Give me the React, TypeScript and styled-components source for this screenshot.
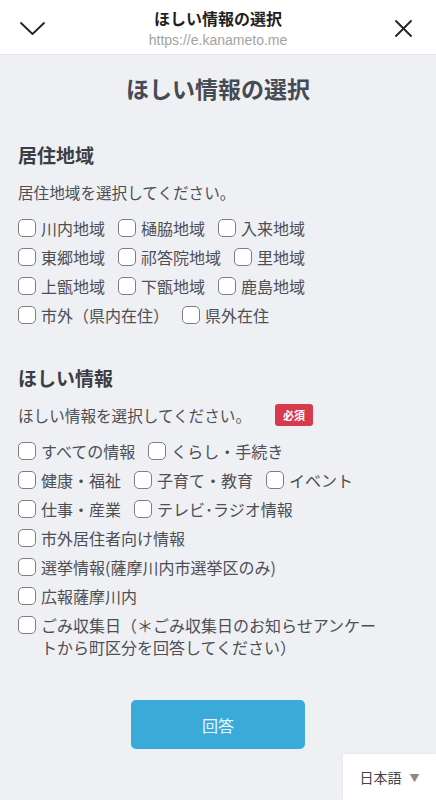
import React from "react";
import styled, { createGlobalStyle } from "styled-components";

const Global = createGlobalStyle`
  html, body { margin: 0; padding: 0; }
  body {
    background: #eff0f4;
    font-family: "Noto Sans CJK JP", "Noto Sans", sans-serif;
    color: #4a4a4a;
  }
`;

const Page = styled.div`
  width: 436px;
  min-height: 800px;
  background: #eff0f4;
  display: flex;
  flex-direction: column;
  position: relative;
`;

const TopBar = styled.header`
  height: 55px;
  background: #fff;
  display: grid;
  grid-template-columns: 64px 1fr 64px;
  align-items: center;
  border-bottom: 1px solid #e8e8ec;
  box-sizing: border-box;
`;

const IconBtn = styled.div<{ $align: "left" | "right" }>`
  display: flex;
  justify-content: ${(p) => (p.$align === "left" ? "flex-start" : "flex-end")};
  padding: ${(p) => (p.$align === "left" ? "2px 0 0 20px" : "2px 24px 0 0")};
  align-items: center;
  color: #222;
`;

const TitleBlock = styled.div`
  display: flex;
  flex-direction: column;
  align-items: center;
  padding-top: 1px;
`;

const BarTitle = styled.div`
  font-size: 16px;
  font-weight: 700;
  color: #1f1f1f;
  line-height: 20px;
`;

const BarUrl = styled.div`
  font-family: "Liberation Sans", Arial, sans-serif;
  font-size: 14px;
  color: #a3a3a3;
  line-height: 16px;
  margin-top: 4px;
`;

const Main = styled.main`
  padding: 16px 18px 0 18px;
  display: flex;
  flex-direction: column;
`;

const PageTitle = styled.h1`
  margin: 0;
  text-align: center;
  font-size: 23px;
  font-weight: 700;
  color: #464a52;
  line-height: 34px;
`;

const Section = styled.section<{ $top: number }>`
  margin-top: ${(p) => p.$top}px;
  display: flex;
  flex-direction: column;
`;

const SectionHeading = styled.h2`
  margin: 0;
  font-size: 19px;
  font-weight: 700;
  color: #3b3e44;
  line-height: 26px;
`;

const Desc = styled.div`
  margin-top: 13px;
  font-size: 15.6px;
  color: #4d4f54;
  line-height: 22px;
  display: flex;
  align-items: center;
  gap: 24px;
`;

const Badge = styled.span`
  display: inline-flex;
  align-items: center;
  justify-content: center;
  width: 38px;
  height: 22px;
  border-radius: 3px;
  background: #d73a4c;
  color: #fff;
  font-size: 11px;
  font-weight: 700;
`;

const Options = styled.div`
  margin-top: 14px;
  display: flex;
  flex-direction: column;
`;

const Row = styled.div`
  display: flex;
  flex-wrap: wrap;
  align-items: flex-start;
  column-gap: 13px;
`;

const Option = styled.label`
  display: flex;
  align-items: flex-start;
  gap: 5px;
  font-size: 16px;
  line-height: 22px;
  color: #4d4f54;
  min-height: 29px;
`;

const Box = styled.span`
  flex: none;
  box-sizing: border-box;
  width: 18px;
  height: 18px;
  border: 1.5px solid #7d7d7d;
  border-radius: 5px;
  background: #fff;
  margin-top: 2px;
`;

const Label = styled.span<{ $w?: number }>`
  max-width: ${(p) => (p.$w ? `${p.$w}px` : "none")};
`;

const ButtonWrap = styled.div`
  display: flex;
  justify-content: center;
  margin-top: 42px;
`;

const Submit = styled.button`
  width: 174px;
  height: 49px;
  border: none;
  border-radius: 5px;
  background: #3aabd9;
  color: #eaf6fb;
  font-family: "Noto Sans CJK JP", sans-serif;
  font-size: 16px;
`;

const Lang = styled.div`
  position: absolute;
  right: 0;
  bottom: 0;
  width: 93px;
  height: 46px;
  background: #fff;
  display: flex;
  align-items: center;
  justify-content: center;
  gap: 8px;
  font-size: 14px;
  color: #444;
  box-shadow: 0 0 3px rgba(0, 0, 0, 0.06);
`;

const Caret = styled.span`
  font-size: 10px;
  color: #8a8a8a;
`;

const Check = ({ children, w }: { children: React.ReactNode; w?: number }) => (
  <Option>
    <Box />
    <Label $w={w}>{children}</Label>
  </Option>
);

const regionRows = [
  ["川内地域", "樋脇地域", "入来地域"],
  ["東郷地域", "祁答院地域", "里地域"],
  ["上甑地域", "下甑地域", "鹿島地域"],
  ["市外（県内在住）", "県外在住"],
];

const infoRows = [
  ["すべての情報", "くらし・手続き"],
  ["健康・福祉", "子育て・教育", "イベント"],
  ["仕事・産業", "テレビ･ラジオ情報"],
  ["市外居住者向け情報"],
  ["選挙情報(薩摩川内市選挙区のみ)"],
  ["広報薩摩川内"],
];

export default function App() {
  return (
    <Page>
      <Global />
      <TopBar>
        <IconBtn $align="left">
          <svg width="25" height="13" viewBox="0 0 25 13" fill="none">
            <path d="M1 1 L12.5 12 L24 1" stroke="#222" strokeWidth="1.8" strokeLinecap="round" strokeLinejoin="round" />
          </svg>
        </IconBtn>
        <TitleBlock>
          <BarTitle>ほしい情報の選択</BarTitle>
          <BarUrl>https://e.kanameto.me</BarUrl>
        </TitleBlock>
        <IconBtn $align="right">
          <svg width="17" height="17" viewBox="0 0 17 17" fill="none">
            <path d="M1 1 L16 16 M16 1 L1 16" stroke="#222" strokeWidth="1.8" strokeLinecap="round" />
          </svg>
        </IconBtn>
      </TopBar>
      <Main>
        <PageTitle>ほしい情報の選択</PageTitle>
        <Section $top={37}>
          <SectionHeading>居住地域</SectionHeading>
          <Desc>居住地域を選択してください。</Desc>
          <Options>
            {regionRows.map((r, i) => (
              <Row key={i}>
                {r.map((t) => (
                  <Check key={t}>{t}</Check>
                ))}
              </Row>
            ))}
          </Options>
        </Section>
        <Section $top={32}>
          <SectionHeading>ほしい情報</SectionHeading>
          <Desc>
            ほしい情報を選択してください。<Badge>必須</Badge>
          </Desc>
          <Options>
            {infoRows.map((r, i) => (
              <Row key={i}>
                {r.map((t) => (
                  <Check key={t}>{t}</Check>
                ))}
              </Row>
            ))}
            <Row>
              <Check w={345}>ごみ収集日（＊ごみ収集日のお知らせアンケートから町区分を回答してください）</Check>
            </Row>
          </Options>
        </Section>
        <ButtonWrap>
          <Submit>回答</Submit>
        </ButtonWrap>
      </Main>
      <Lang>
        日本語 <Caret>▼</Caret>
      </Lang>
    </Page>
  );
}
